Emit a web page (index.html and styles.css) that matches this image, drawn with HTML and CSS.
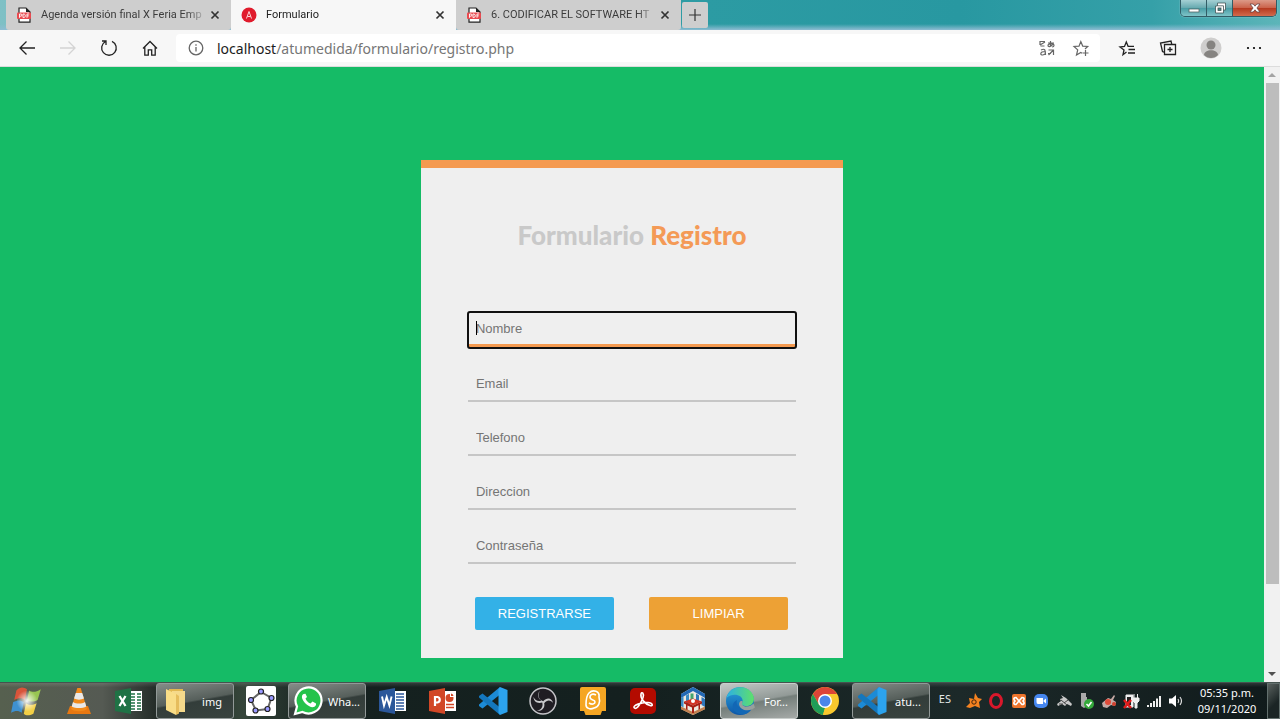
FILE: index.html
```html
<!DOCTYPE html>
<html lang="es">
<head>
<meta charset="utf-8">
<title>Formulario</title>
<link rel="stylesheet" href="styles.css">
</head>
<body>
<svg class="defs" aria-hidden="true">
  <defs>
    <linearGradient id="edgeBlue" x1="0" y1="0" x2="0" y2="1"><stop offset="0" stop-color="#2aa5dc"/><stop offset="1" stop-color="#0d56a8"/></linearGradient>
    <linearGradient id="edgeGreen" x1="0" y1="0" x2="1" y2="0"><stop offset="0" stop-color="#2cb0e4"/><stop offset="1" stop-color="#5fe06a"/></linearGradient>
    <radialGradient id="orb"><stop offset="0" stop-color="#fff" stop-opacity=".95"/><stop offset="1" stop-color="#fff" stop-opacity="0"/></radialGradient>
    <symbol id="pdf" viewBox="0 0 16 16">
      <path d="M3 1h7l4 4v10.200H3z" fill="#fff" stroke="#222" stroke-width="1.200"/><path d="M10 1l4 4h-4z" fill="#222"/>
      <rect x="1" y="5.500" width="14" height="6.500" rx="1" fill="#ea4a50"/>
      <path d="M3.500 10.800V7h1.300a1 1 0 0 1 0 2.200H3.500M7 7v3.500h.8c2 0 2-3.500 0-3.500zM11 10.800V7h2.200M11 8.900h1.800" fill="none" stroke="#fff" stroke-width=".9"/>
    </symbol>
    <symbol id="close" viewBox="0 0 10 10"><path d="M1.500 1.500l7 7M8.500 1.500l-7 7" stroke="currentColor" stroke-width="1.700"/></symbol>
    <symbol id="vscode" viewBox="0 0 30 30">
      <path d="M22 1v7.500L4.500 22.500 1 20v-1.500z" fill="#1c8bd6"/>
      <path d="M22 29v-7.500L4.500 7.500 1 10v1.500z" fill="#1477bd"/>
      <path d="M22 1l7.500 3v22L22 29l-1.500-2V3z" fill="#2ca3ee"/>
    </symbol>
  </defs>
</svg>

<header class="browser">
  <div class="tabstrip">
    <div class="tabs">
      <div class="tab"><svg class="favicon"><use href="#pdf"/></svg><span class="tab-title">Agenda versión final X Feria Emp</span><button class="tab-close" aria-label="Cerrar pestaña"><svg><use href="#close"/></svg></button></div>
      <div class="tab tab-active"><svg class="favicon" viewBox="0 0 16 16"><circle cx="8" cy="8" r="7.500" fill="#e01b2c"/><path d="M5.500 11.500L8 4.500l2.500 7M6.500 9.500h3" fill="none" stroke="#fbd5d8"/></svg><span class="tab-title">Formulario</span><button class="tab-close" aria-label="Cerrar pestaña"><svg><use href="#close"/></svg></button></div>
      <div class="tab"><svg class="favicon"><use href="#pdf"/></svg><span class="tab-title">6. CODIFICAR EL SOFTWARE HT</span><button class="tab-close" aria-label="Cerrar pestaña"><svg><use href="#close"/></svg></button></div>
      <button class="new-tab" aria-label="Nueva pestaña"><svg viewBox="0 0 14 14"><path d="M7 1v12M1 7h12" stroke="#333" stroke-width="1.200"/></svg></button>
    </div>
    <div class="window-controls">
      <button aria-label="Minimizar"><svg viewBox="0 0 14 12"><rect x="2" y="7" width="10" height="3" fill="#fff" stroke="#566" stroke-width=".8"/></svg></button>
      <button aria-label="Restaurar"><svg viewBox="0 0 14 12"><path d="M4.500 1h8v7h-2v3h-8V4h2z" fill="#fff" stroke="#455" stroke-width=".8"/><rect x="5" y="6" width="3" height="2.500" fill="#488" stroke="#455" stroke-width=".8"/><path d="M5 3.800h5.500V8" fill="none" stroke="#455" stroke-width=".8"/></svg></button>
      <button class="window-close" aria-label="Cerrar"><svg viewBox="0 0 14 12"><path d="M2 2h3.200L7 4.200 8.800 2H12L8.900 6l3.100 4H8.800L7 7.800 5.200 10H2l3.100-4z" fill="#fff" stroke="#644" stroke-width=".8"/></svg></button>
    </div>
  </div>

  <div class="toolbar">
    <nav class="nav-buttons">
      <button aria-label="Atrás"><svg viewBox="0 0 18 18"><path d="M17 9H2M8.500 2.500L2 9l6.500 6.500" class="line"/></svg></button>
      <button class="disabled" aria-label="Adelante"><svg viewBox="0 0 18 18"><path d="M1 9h15M9.500 2.500L16 9l-6.500 6.500" class="line"/></svg></button>
      <button aria-label="Actualizar"><svg viewBox="0 0 18 18"><path d="M12 2.300A7.300 7.300 0 1 1 5.500 2.500M2 2h4v4" class="line"/></svg></button>
      <button aria-label="Inicio"><svg viewBox="0 0 18 18"><path d="M2 9.500L9 2.500l7 7M3.800 8v8.200h3.500v-5.400h3.400v5.400h3.500V8" class="line"/></svg></button>
    </nav>
    <div class="address">
      <svg class="info" viewBox="0 0 16 16"><circle cx="8" cy="8" r="6.800" class="line"/><path d="M8 7v4.500M8 4.300v1.400" class="line"/></svg>
      <span class="url"><span class="host">localhost</span>/atumedida/formulario/registro.php</span>
      <button aria-label="Traducir"><svg viewBox="0 0 18 18"><path d="M2 6V2.500h5M2 6l5-3M2.500 7h4M10 4h6M12.500 2v4.500M15 4.500c-1 3-5 4-5 2 0-2 6-2.500 6 0 0 1.200-1 1.500-2 1.500M3 11c4-2 4.500 0 4.500 5M7.300 12.500c-3 0-4.500.8-4.500 2.200 0 2 3.500 1.500 4.500 0M10.500 11h5v5M10.500 16l5-5M10 14.500h3" fill="none" stroke="#666" stroke-width="1.200"/></svg></button>
      <button aria-label="Agregar a favoritos"><svg viewBox="0 0 18 18"><path d="M10 14.200l-1.200-.8L4.500 16l1.200-5.100L2 7.500l5-.4L8.800 2.500l1.900 4.600 5 .4L13 10M13.500 11v6M10.500 14h6" fill="none" stroke="#666" stroke-width="1.200"/></svg></button>
    </div>
    <div class="actions">
      <button aria-label="Favoritos"><svg viewBox="0 0 18 18"><path d="M8.500 13L5 15.700l1-4.700-4-3 4.500-.5L8.300 3l1.800 4.300H16M10.500 10.500H17M10 14h7" class="line"/></svg></button>
      <button aria-label="Colecciones"><svg viewBox="0 0 18 18"><path d="M5.500 5.500h11v10h-11zM11 8v5M8.500 10.500h5M5.500 13.500l-2-1-2-8.500L12 2l.8 3.500" class="line"/></svg></button>
      <button class="profile" aria-label="Perfil"><svg viewBox="0 0 22 22"><circle cx="11" cy="11" r="10.500" fill="#cfcecd"/><circle cx="11" cy="8" r="4.500" fill="#858380"/><path d="M4 18c0-6.500 14-6.500 14 0-3.500 4-10.500 4-14 0z" fill="#858380"/></svg></button>
      <button aria-label="Más opciones"><svg viewBox="0 0 18 18"><circle cx="3" cy="9" r="1.100"/><circle cx="9" cy="9" r="1.100"/><circle cx="15" cy="9" r="1.100"/></svg></button>
    </div>
  </div>
</header>

<div class="viewport">
  <main class="page">
    <form class="card">
      <h1 class="title">Formulario <span class="accent">Registro</span></h1>
      <div class="fields">
        <div class="field-caret"><input class="field" type="text" placeholder="Nombre" aria-label="Nombre" autofocus></div>
        <input class="field" type="email" placeholder="Email" aria-label="Email">
        <input class="field" type="tel" placeholder="Telefono" aria-label="Telefono">
        <input class="field" type="text" placeholder="Direccion" aria-label="Direccion">
        <input class="field" type="password" placeholder="Contraseña" aria-label="Contraseña">
      </div>
      <div class="form-actions">
        <button class="btn btn-submit" type="submit">REGISTRARSE</button>
        <button class="btn btn-reset" type="reset">LIMPIAR</button>
      </div>
    </form>
  </main>
  <div class="scrollbar">
    <svg class="arrow" viewBox="0 0 16 16"><path d="M4 10l4-4 4 4z" fill="#a3a3a3"/></svg>
    <div class="track"><div class="thumb"></div></div>
    <svg class="arrow" viewBox="0 0 16 16"><path d="M4 6l4 4 4-4z" fill="#505050"/></svg>
  </div>
</div>

<footer class="taskbar">
  <div class="apps">
    <button class="app start" aria-label="Inicio"><svg viewBox="0 0 32 32"><path d="M6 6c4-4 7-3 10-1l-2 10c-3-2-6-2-10 0z" fill="#d8543a"/><path d="M18 6c3 2 6 2 11-1l-3 10c-4 2-7 2-10 0z" fill="#98c552"/><path d="M3 17c4-2 7-2 10 0l-2 10c-3-2-6-2-10 0z" fill="#3f91d0"/><path d="M15 18c3 2 6 2 10 0l-3 10c-4 2-7 2-9 0z" fill="#f2cf45"/><circle cx="16" cy="16" r="10" fill="url(#orb)"/></svg></button>
    <button class="app" aria-label="VLC"><svg viewBox="0 0 30 30"><path d="M6 20h18l3 8H3z" fill="#e87811"/><path d="M13.300 2h3.400L23 23c-3 3-13 3-16 0z" fill="#f18a1b"/><path d="M11.800 7h6.400l1.800 5.500c-3 1.500-7 1.500-10 0zM9 16c3 2 9 2 12 0l1.300 4.500c-4 2-10.600 2-14.600 0z" fill="#e9e9e9"/></svg></button>
    <button class="app" aria-label="Excel"><svg viewBox="0 0 30 30"><path d="M15 5h13v20H15z" fill="#fff"/><path d="M17 8h4m2 0h4M17 11h4m2 0h4M17 14h4m2 0h4M17 17h4m2 0h4M17 20h4m2 0h4M17 23h4m2 0h4" stroke="#217346" stroke-width="1.700"/><path d="M1 5l16-3v26L1 25z" fill="#1f7245"/><path d="M5.500 10l6 10M11.500 10l-6 10" stroke="#fff" stroke-width="2.300"/></svg></button>
    <button class="app app-open"><svg viewBox="0 0 30 30"><path d="M8 3h14v22H8z" fill="#e2b852"/><path d="M11 5h13v21H11z" fill="#f5d98b"/><path d="M5 3l10 5v21L5 24z" fill="#f9dd87"/><path d="M15 8v21l3-1.500V10z" fill="#e6bd5d"/></svg><span>img</span></button>
    <button class="app" aria-label="GeoGebra"><svg viewBox="0 0 30 30"><rect width="30" height="30" rx="2" fill="#fff"/><path d="M15 6l10.500 6-4 11L10 24.500 5 14z" fill="none" stroke="#666" stroke-width="2"/><g fill="#9999ff" stroke="#222" stroke-width="1.200"><circle cx="15" cy="5.500" r="2.500"/><circle cx="25.500" cy="12" r="2.500"/><circle cx="21.500" cy="23" r="2.500"/><circle cx="9.500" cy="24.500" r="2.500"/><circle cx="5" cy="14" r="2.500"/></g></svg></button>
    <button class="app app-open"><svg viewBox="0 0 30 30"><path d="M2 28l2-7.500A13 13 0 1 1 9.500 26z" fill="#24c34b" stroke="#fff" stroke-width="2.200"/><path d="M10.500 8c-3 2-1.500 6 2.500 10 4 3.500 8 4.500 10 1v-1.500L19.500 15.500l-2 2c-2.500-1-4-2.500-5-5L14 11l-1.500-3.200z" fill="#fff"/></svg><span>Wha...</span></button>
    <button class="app" aria-label="Word"><svg viewBox="0 0 30 30"><path d="M15 5h13v20H15z" fill="#fff"/><path d="M18 8h8M18 11h8M18 14h8M18 17h8M18 20h8M18 23h8" stroke="#2b579a" stroke-width="1.300"/><path d="M1 5l16-3v26L1 25z" fill="#2b579a"/><path d="M4 10.500l2 9 2.700-8.500 2.700 8.500 2.200-9" fill="none" stroke="#fff" stroke-width="1.900"/></svg></button>
    <button class="app" aria-label="PowerPoint"><svg viewBox="0 0 30 30"><path d="M15 5h13v20H15z" fill="#fff"/><circle cx="21.500" cy="12" r="4" fill="#d24726"/><path d="M22 11V6.500h4V11z" fill="#fff"/><path d="M23 10V7.500a3 3 0 0 1 2.500 2.500z" fill="#d24726"/><path d="M18 18.500h8M18 21.500h8" stroke="#d24726" stroke-width="1.500"/><path d="M1 5l16-3v26L1 25z" fill="#d24726"/><path d="M7 20V11h2.500a2.800 2.800 0 0 1 0 5.500H7" fill="none" stroke="#fff" stroke-width="2.200"/></svg></button>
    <button class="app" aria-label="Visual Studio Code"><svg><use href="#vscode"/></svg></button>
    <button class="app" aria-label="OBS"><svg viewBox="0 0 30 30"><circle cx="15" cy="15" r="13" fill="#1f1d23" stroke="#c4c4c8" stroke-width="1.500"/><path d="M12 5c-3 4-1 9 3.200 10.200C19 11 24 12 25 17c-2-3-6-3.500-8.800.2C17.500 22 13 26 9 24.500c4 0 6.500-4 5.200-8C9 18 5.500 15 5.500 11c1.500 3.500 4.500 4.800 7.800 3.700C9.500 12 9 7.500 12 5z" fill="#c9c9cc"/></svg></button>
    <button class="app" aria-label="Scratch"><svg viewBox="0 0 30 30"><path d="M4 1h22q2 0 2 2v22h-4l-1.500 4h-15L6 25H2V3q0-2 2-2z" fill="#f5a623"/><path d="M11 7c4-4 11-2 10 4 1.500 5 0 10-5 11-4 2-8 0-8-3 0-4 0-9 3-12z" fill="none" stroke="#fff" stroke-width="1.600"/><path d="M18 9c-4-2-6 0-6 2 0 4 5 2 5 5 0 2-3 3-6 1" fill="none" stroke="#fff" stroke-width="1.600"/></svg></button>
    <button class="app" aria-label="Acrobat"><svg viewBox="0 0 30 30"><rect x="2" y="2" width="26" height="26" rx="5" fill="#b30b00"/><path d="M6.500 22c-3-2.500 8-6 13.500-5.500 5 .5 5.500 4 2 3-5-1.500-10-7-9-11.500.8-2.700 3.300-.8 2 3.500C13.500 16 9 24 6.500 22z" fill="none" stroke="#fff" stroke-width="1.600"/></svg></button>
    <button class="app" aria-label="Sweet Home"><svg viewBox="0 0 30 30"><path d="M15 1l12 7v15l-12 6-12-6V8z" fill="#eee9e0"/><path d="M15 1l12 7v4L15 5 3 12V8z" fill="#2369b5"/><path d="M3 12l2.500-1.500v11L3 20zM8 9.500l3-1.700v10L8 19z" fill="#3b8bc4"/><path d="M18 7.500l3 1.800v8l-3-1zM23.500 11l3.500 2v8l-3.500-2z" fill="#2f77bb"/><path d="M12.500 7.500h3v7h-3z" fill="#45a56c"/><path d="M3 20.500L15 26l12-5.500v2.800L15 29 3 23.300z" fill="#c08050"/><path d="M6 15.500l9-3 9 3-9 4z" fill="#d23324"/><path d="M6 15.500l9 4 9-4v2l-2 1v4.500l-1.500.7v-4.400L16 21.500V27h-2v-5.500l-4.500-2v4.400L8 23.200v-4.700l-2-1z" fill="#a82015"/><circle cx="15" cy="15" r="2" fill="#fff"/></svg></button>
    <button class="app app-open app-current"><svg viewBox="0 0 30 30"><circle cx="15" cy="15" r="14" fill="url(#edgeBlue)"/><path d="M1.500 12C4 0 22-3 28 9c3 7-2 12-8 11-4-.5-4-2.500-2.500-4C19 9 8 6 1.500 12z" fill="url(#edgeGreen)"/><path d="M12 14c-2 6 4 11 14.500 9-4 7-13 7-17 2-3-4-2-9 2.500-11z" fill="#1267b5"/><path d="M17.500 16c-1.500 2 0 4.500 4 4.500 3 0 5-1 7-3l1.500 4-3 2c-6 2-12 0-13-5 0-1.500.5-3 2-3.500 1.300 0 2 .2 1.500 1z" fill="#98a09d"/></svg><span>For...</span></button>
    <button class="app" aria-label="Chrome"><svg viewBox="0 0 30 30"><circle cx="15" cy="15" r="14" fill="#f9c82d"/><path d="M2.900 8A14 14 0 0 1 27.100 8H15L9 18.500z" fill="#dc4437"/><path d="M2.900 8l6 10.500L15 22l-2 6.900A14 14 0 0 1 2.900 8z" fill="#1f9d58"/><path d="M15 28.900l6.100-10.400L15 22l-2 6.800z" fill="#f9c82d"/><circle cx="15" cy="15" r="7" fill="#fff"/><circle cx="15" cy="15" r="5.500" fill="#4a86e8"/></svg></button>
    <button class="app app-open"><svg><use href="#vscode"/></svg><span>atu...</span></button>
  </div>
  <span class="lang">ES</span>
  <div class="tray">
    <svg viewBox="0 0 18 18"><path d="M10 1l3 5 4 1-3 3 1 6-5-2-5 2-4-1 4-4-1-5 5 1z" fill="#f58220"/><circle cx="9" cy="10" r="2.200" fill="none" stroke="#40230d"/></svg>
    <svg viewBox="0 0 18 18"><ellipse cx="9" cy="9" rx="5.500" ry="6.500" fill="none" stroke="#d9182b" stroke-width="3"/></svg>
    <svg viewBox="0 0 18 18"><rect x="2" y="2" width="14" height="14" rx="2" fill="#ee752c"/><path d="M6 5.500c-3 0-2.500 3-.5 3.500-2 .5-2.500 3.500.5 3.500l6-7c3 0 2.500 3 .5 3.500 2 .5 2.500 3.500-.5 3.500z" fill="none" stroke="#fff" stroke-width="1.600"/></svg>
    <svg viewBox="0 0 18 18"><rect x="2" y="2" width="14" height="14" rx="5" fill="#4687ef"/><path d="M4.500 6H11v6H6q-1.500 0-1.500-2zM11.500 8.500L14 6.500v5l-2.500-2z" fill="#fff"/></svg>
    <svg viewBox="0 0 18 18"><path d="M6 3l5 3 2 2 4 4-1 2-4-2-2 2-3-2-4 2-1-2 4-3-1-2 3-1z" fill="#c8c8c8"/><path d="M6 8l6 5M9 11l4-3M4 12h4" stroke="#444"/></svg>
    <svg viewBox="0 0 18 18"><path d="M4 1h5v4h1v9l-3 2-3-2V5z" fill="#aaa"/><circle cx="12" cy="12" r="5" fill="#34a83b"/><path d="M9.500 12l2 2 3-4" fill="none" stroke="#fff" stroke-width="1.600"/></svg>
    <svg viewBox="0 0 18 18"><path d="M2 11l6-5 3 1 3-4 1 1-2 4 3 2-1 4-4-1-4 3-4-1z" fill="#c5a9a5"/><circle cx="8" cy="10" r="3" fill="#e04b39"/><circle cx="14" cy="12" r="2" fill="#d0402e"/></svg>
    <svg viewBox="0 0 18 18"><path d="M4 3h7v12H4zM12 2v4M15.500 2v4M11 6h6v3l-2 2v5h-2v-5l-2-2z" fill="#eee" stroke="#eee"/><path d="M5 5h4v8H5z" fill="#222"/><path d="M2 8l7 8M9 8l-7 8" stroke="#e01c1c" stroke-width="2.600"/></svg>
    <svg viewBox="0 0 18 18"><path d="M2 13h2v2H2zM5 11h2v4H5zM8 9h2v6H8zM11 6.500h2V15h-2zM14 4h2v11h-2z" fill="#eee"/></svg>
    <svg viewBox="0 0 18 18"><path d="M2 6.500h3L9 3v12l-4-3.500H2z" fill="#fff"/><path d="M11 7q1.500 2 0 4M13 5q3 4 0 8" fill="none" stroke="#ddd" stroke-width="1.200"/></svg>
  </div>
  <div class="clock"><span>05:35 p.m.</span><span>09/11/2020</span></div>
  <button class="show-desktop" aria-label="Mostrar escritorio"></button>
</footer>
</body>
</html>
```

FILE: styles.css
```css
* { box-sizing: border-box; }

body {
  margin: 0;
  height: 100vh;
  display: flex;
  flex-direction: column;
  overflow: hidden;
  font-family: "Noto Sans", "Open Sans", sans-serif;
  font-size: 12px;
}

button {
  margin: 0;
  padding: 0;
  border: 0;
  background: none;
  color: inherit;
  font: inherit;
}

svg { display: block; flex-shrink: 0; }
.defs { position: absolute; width: 0; height: 0; }
.line { fill: none; stroke: currentColor; stroke-width: 1.3; }

/* Tab strip */
.tabstrip {
  display: flex;
  justify-content: space-between;
  align-items: flex-start;
  height: 30px;
  padding: 0 3px 0 6px;
  background: linear-gradient(transparent 24px, #8fbdd3 30px), linear-gradient(90deg, #7fc0c5, #2c9ba3 55%, #2898a1 75%, #35a0a8 90%, #5db5b9);
}
.tabs { display: flex; }
.tab {
  display: flex;
  align-items: center;
  width: 225px;
  height: 30px;
  padding: 0 8px 0 10px;
  background: #cecece;
  border-radius: 0 0 3px 3px;
  color: #3c3c3c;
}
.tab-active { background: #f7f7f7; color: #222; border-radius: 0; }
.favicon { width: 16px; height: 16px; }
.tab-title {
  flex: 1;
  min-width: 0;
  margin-left: 9px;
  overflow: hidden;
  white-space: nowrap;
  line-height: 18px;
  font-family: Roboto, sans-serif;
  font-size: 11px;
  mask-image: linear-gradient(90deg, #000 88%, transparent);
}
.tab-close { padding: 3px; color: #333; }
.tab-close svg { width: 10px; height: 10px; }
.new-tab {
  width: 26px;
  height: 26px;
  margin: 2px 0 0 1px;
  padding: 6px;
  background: #cecece;
  border-radius: 2px;
}
.new-tab svg { width: 14px; height: 14px; }

.window-controls {
  display: flex;
  height: 17px;
  border: 1px solid #315d66;
  border-top: 0;
  border-radius: 0 0 5px 5px;
  overflow: hidden;
  box-shadow: 0 0 1px #fff;
}
.window-controls button {
  display: grid;
  place-items: center;
  width: 26px;
  background: linear-gradient(#a5d0d4, #65a9af 50%, #489da5 52%, #80c4c8);
  border-right: 1px solid #315d66;
}
.window-controls svg { width: 14px; height: 12px; }
.window-controls .window-close {
  width: 43px;
  border: 0;
  background: linear-gradient(#dc9a88, #ca6149 50%, #b63a20 52%, #d26a4c);
}

/* Toolbar */
.toolbar {
  display: flex;
  align-items: center;
  height: 37px;
  padding: 0 17px 0 18px;
  background: #f7f7f7;
  border-bottom: 1px solid #dcdcdc;
  color: #222;
}
.nav-buttons { display: flex; gap: 23px; margin-right: 17px; }
.toolbar button svg { width: 18px; height: 18px; }
.disabled { color: #d4d4d4; }
.address {
  display: flex;
  flex: 1;
  align-items: center;
  gap: 16px;
  height: 28px;
  padding: 0 10px 0 12px;
  background: #fff;
  border-radius: 4px;
}
.info { width: 16px; height: 16px; color: #666; }
.url {
  flex: 1;
  margin-left: -3px;
  font-family: "Noto Sans", sans-serif;
  font-size: 14px;
  color: #767676;
}
.host { color: #1c1c1c; }
.actions { display: flex; align-items: center; gap: 23px; margin-left: 18px; }
.toolbar .profile svg { width: 22px; height: 22px; }

/* Page */
.viewport { display: flex; flex: 1; min-height: 0; background: #15bb66; }
.page { flex: 1; padding-top: 93px; }
.card {
  width: 33.4%;
  min-width: 300px;
  margin: 0 auto;
  padding: 49px 47px 28px;
  background: #efefef;
  border-top: 8px solid #f49a50;
}
.title {
  margin: 0 0 59px;
  font-family: "Lato Black", Lato, sans-serif;
  font-size: 26px;
  font-weight: 900;
  line-height: 36px;
  text-align: center;
  color: #c9c9c9;
}
.accent { color: #f49a56; }
.fields { display: flex; flex-direction: column; gap: 18px; }
.field {
  display: block;
  width: 100%;
  height: 36px;
  padding: 0 8px;
  border: 0;
  border-bottom: 2px solid #c6c6c6;
  background: transparent;
  font-family: "Liberation Sans", Arial, sans-serif;
  font-size: 13px;
  color: #222;
}
.field::placeholder { color: #757575; opacity: 1; }
.field:focus {
  border-bottom: 4px solid #f49a50;
  outline: 2px solid #101010;
  outline-offset: -1px;
  border-radius: 2px;
}
.field-caret { position: relative; }
.field-caret .field { caret-color: transparent; }
.field-caret:focus-within::after {
  content: "";
  position: absolute;
  left: 8px;
  top: 9px;
  width: 1px;
  height: 14px;
  background: #000;
}
.form-actions { display: flex; justify-content: space-between; padding: 33px 8px 0 7px; }
.btn {
  width: 139px;
  height: 33px;
  border-radius: 2px;
  color: #fff;
  font-family: "Liberation Sans", Arial, sans-serif;
  font-size: 13px;
}
.btn-submit { background: #33b1e7; }
.btn-reset { background: #eda135; }

.scrollbar { display: flex; flex-direction: column; width: 16px; background: #f1f1f1; }
.arrow { width: 16px; height: 16px; }
.track { flex: 1; padding: 0 1px 0 2px; }
.thumb { height: 86%; background: #bdbdbd; }

/* Taskbar */
.taskbar {
  display: flex;
  align-items: stretch;
  height: 37px;
  border-top: 1px solid #46534f;
  background: linear-gradient(rgba(255, 255, 255, .12), transparent 12%), linear-gradient(90deg, #56604f, #555a53 8%, #1b2421 13%, #35453a 19%, #15211f 25%, #14201f 50%, #1c2929 75%, #101a1b);
  color: #fff;
}
.apps { display: flex; }
.app { display: flex; align-items: center; justify-content: center; width: 50px; }
.app svg { width: 30px; height: 30px; }
.app.start { width: 54px; }
.app.start svg { width: 34px; height: 34px; }
.app-open {
  justify-content: flex-start;
  gap: 4px;
  width: 78px;
  margin: 0 2px;
  padding: 0 4px;
  border: 1px solid #929998;
  border-radius: 3px;
  background: linear-gradient(170deg, #858c88, #565f5b 48%, #333d3a 52%, #39433f);
  font-size: 11px;
}
.app-open span { flex: 1; text-align: center; white-space: nowrap; }
.app-current { background: linear-gradient(170deg, #c3c8c6, #929a97 48%, #747e7a 52%, #a6aaa8); border-color: #c9cecc; }
.lang { margin-left: auto; padding: 7px 14px 0 0; line-height: 18px; font-size: 11px; color: #e3e7e6; }
.tray { display: flex; align-items: center; justify-content: space-between; width: 220px; margin-right: 2px; }
.tray svg { width: 18px; height: 18px; }
.clock {
  display: flex;
  flex-direction: column;
  align-items: center;
  justify-content: center;
  width: 80px;
  line-height: 16px;
  font-size: 11px;
}
.show-desktop {
  width: 13px;
  border: 1px solid #63706e;
  background: linear-gradient(135deg, #59615e, #1b2525 60%);
}
```
